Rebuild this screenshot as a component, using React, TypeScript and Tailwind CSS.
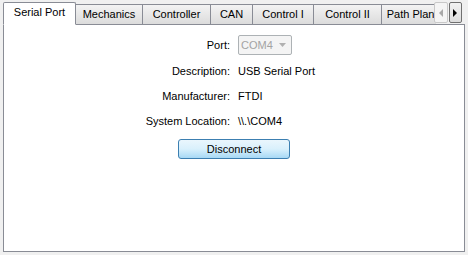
import type { ReactNode } from "react";

const font = { fontFamily: '"Liberation Sans", Arial, sans-serif' };

const tabs = [
  { label: "Mechanics", w: "w-[67px]" },
  { label: "Controller", w: "w-[69px]" },
  { label: "CAN", w: "w-[43px]" },
  { label: "Control I", w: "w-[62px]" },
  { label: "Control II", w: "w-[69px]" },
  { label: "Path Planning", w: "w-[80px]" },
];

const Row = ({ label, children }: { label: string; children: ReactNode }) => (
  <div className="flex items-center h-[25px]">
    <div className="w-[226px] text-right pr-0">{label}</div>
    <div className="ml-[8px]">{children}</div>
  </div>
);

const App = () => {
  return (
    <div
      className="w-[468px] h-[255px] bg-[#f0f0f0] text-[11px] text-black flex flex-col px-[3px] pt-[2px] pb-[3px] overflow-hidden"
      style={font}
    >
      {/* tab strip */}
      <div className="relative flex items-end h-[22px] z-10">
        <div className="w-[73px] h-[23px] -mb-px bg-white border border-[#898c95] border-b-white rounded-t-[2px] flex items-center justify-center pb-[2px] z-10">
          Serial Port
        </div>
        <div className="flex items-end overflow-hidden w-[360px]">
          {tabs.map((t, i) => (
            <div
              key={t.label}
              className={`${t.w} shrink-0 h-[20px] border border-[#898c95] border-b-0 ${
                i === 0 ? "border-l-0" : "-ml-px"
              } bg-gradient-to-b from-[#f3f3f3] to-[#dcdcdc] flex items-center justify-center whitespace-nowrap`}
            >
              {t.label}
            </div>
          ))}
        </div>
        {/* scroll buttons */}
        <div className="absolute right-[3px] top-0 flex gap-px">
          <div className="w-[14px] h-[21px] border border-[#c8c8c8] bg-[#f4f4f4] rounded-[2px] flex items-center justify-center">
            <svg width="5" height="8" viewBox="0 0 5 8">
              <path d="M4 0 L0 4 L4 8 Z" fill="#a8a8a8" />
            </svg>
          </div>
          <div className="w-[13px] h-[21px] border border-[#707070] bg-gradient-to-b from-[#f2f2f2] to-[#dcdcdc] rounded-[2px] flex items-center justify-center">
            <svg width="5" height="8" viewBox="0 0 5 8">
              <path d="M0 0 L4 4 L0 8 Z" fill="#000" />
            </svg>
          </div>
        </div>
      </div>

      {/* panel */}
      <div className="flex-1 bg-white border border-[#898c95] flex flex-col">
        <div className="flex items-center h-[20px] mt-[10px]">
          <div className="w-[226px] text-right">Port:</div>
          <div className="ml-[8px] w-[54px] h-[20px] border border-[#adb2b5] rounded-[2px] bg-[#f4f4f4] flex items-center justify-between pl-[2px] pr-[5px] text-[#a3a3a3]">
            <span>COM4</span>
            <svg width="7" height="4" viewBox="0 0 7 4">
              <path d="M0 0 L7 0 L3.5 4 Z" fill="#b0b0b0" />
            </svg>
          </div>
        </div>
        <div className="mt-[4px]">
          <Row label="Description:">USB Serial Port</Row>
          <Row label="Manufacturer:">FTDI</Row>
          <Row label="System Location:">\\.\COM4</Row>
        </div>
        <button
          className="ml-[174px] mt-[5px] w-[112px] h-[20px] border border-[#3c7fb1] rounded-[3px] bg-gradient-to-b from-[#eaf6fd] via-[#d9f0fc] to-[#a7d9f5] text-black text-[11px] flex items-center justify-center"
          style={font}
        >
          Disconnect
        </button>
      </div>
    </div>
  );
};

export default App;
